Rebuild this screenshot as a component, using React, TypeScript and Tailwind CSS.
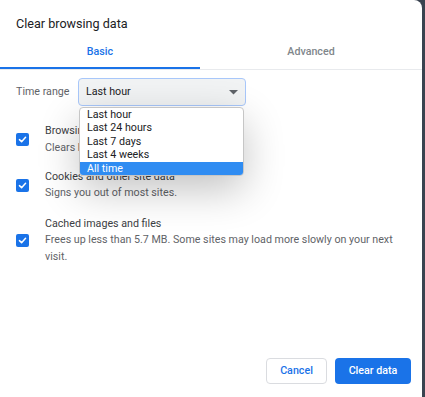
import React from 'react';

const options = ['Last hour', 'Last 24 hours', 'Last 7 days', 'Last 4 weeks', 'All time'];

const Check = () => (
  <div className="w-[13px] h-[13px] rounded-[2px] bg-[#1a73e8] flex items-center justify-center shrink-0">
    <svg width="9" height="9" viewBox="0 0 10 10" fill="none">
      <path d="M1.6 5.2 L4 7.4 L8.4 2.6" stroke="white" strokeWidth="1.7" strokeLinecap="round" strokeLinejoin="round" />
    </svg>
  </div>
);

const App: React.FC = () => {
  return (
    <div className="w-[425px] h-[397px] bg-[#3a4350] flex font-['Roboto',sans-serif]">
      <div className="w-[422px] h-[397px] bg-white rounded-tr-[8px] flex flex-col">
        {/* Title */}
        <div className="pl-4 pt-[16px] text-[12.6px] text-[#202124] leading-[16px]">Clear browsing data</div>

        {/* Tabs */}
        <div className="mt-[13px] flex border-b border-[#e8eaed]">
          <div className="w-[200px] flex flex-col items-center">
            <span className="text-[10.7px] font-medium text-[#1a73e8] leading-[14px]">Basic</span>
            <div className="mt-[8px] h-[2px] w-full bg-[#1a73e8]" />
          </div>
          <div className="flex-1 flex flex-col items-center">
            <span className="text-[10.7px] font-medium text-[#80868b] leading-[14px]">Advanced</span>
            <div className="mt-[8px] h-[2px]" />
          </div>
        </div>

        {/* Time range */}
        <div className="relative mt-[8px] flex items-center pl-4">
          <span className="text-[10.7px] text-[#5f6368] w-[62px]">Time range</span>
          <div className="relative w-[168px] h-[28px] rounded-[4px] border border-[#a8c7fa] bg-[#f1f3f4] flex items-center px-[7px]">
            <span className="text-[10.7px] text-[#202124]">Last hour</span>
            <svg className="absolute right-[7px] top-[11px]" width="9" height="5" viewBox="0 0 9 5">
              <path d="M0 0 L9 0 L4.5 4.5 Z" fill="#5f6368" />
            </svg>
            {/* Open list */}
            <div className="absolute left-0 top-[28px] w-[165px] bg-white border border-[#c6c6c6] rounded-[4px] overflow-hidden shadow-[0_14px_40px_rgba(0,0,0,0.24)] z-10">
              {options.map((o) => (
                <div
                  key={o}
                  className={`px-[7px] text-[10.7px] leading-[13.4px] ${o === 'All time' ? 'bg-[#2f8cf2] text-white' : 'text-[#202124]'}`}
                >
                  {o}
                </div>
              ))}
            </div>
          </div>
        </div>

        {/* Checkboxes */}
        <div className="mt-[17px] flex flex-col">
          <div className="flex items-center pl-4 gap-4">
            <Check />
            <div className="flex flex-col leading-[16.5px]">
              <span className="text-[10.7px] text-[#3c4043]">Browsing history</span>
              <span className="text-[10.7px] text-[#5f6368]">Clears history</span>
            </div>
          </div>
          <div className="mt-[12.5px] flex items-center pl-4 gap-4">
            <Check />
            <div className="flex flex-col leading-[16.5px]">
              <span className="text-[10.7px] text-[#3c4043]">Cookies and other site data</span>
              <span className="text-[10.7px] text-[#5f6368]">Signs you out of most sites.</span>
            </div>
          </div>
          <div className="mt-[14px] flex items-center pl-4 gap-4">
            <Check />
            <div className="flex flex-col leading-[16.5px] pr-4">
              <span className="text-[10.7px] text-[#3c4043]">Cached images and files</span>
              <span className="text-[10.7px] text-[#5f6368]">Frees up less than 5.7 MB. Some sites may load more slowly on your next visit.</span>
            </div>
          </div>
        </div>

        {/* Footer */}
        <div className="mt-auto mb-[13px] flex justify-end gap-2 pr-[11px]">
          <button className="w-[61px] h-[26px] rounded-[4px] border border-[#dadce0] bg-white text-[10.7px] font-medium text-[#1a73e8]">
            Cancel
          </button>
          <button className="w-[76px] h-[26px] rounded-[4px] bg-[#1a73e8] text-[10.7px] font-medium text-white">
            Clear data
          </button>
        </div>
      </div>
    </div>
  );
};

export default App;
